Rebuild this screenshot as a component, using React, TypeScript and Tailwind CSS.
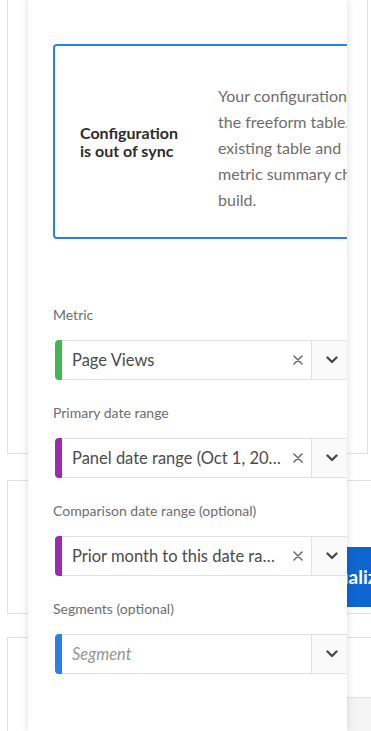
import React from "react";

const font = { fontFamily: "Lato, 'Noto Sans', sans-serif" };

function XIcon() {
  return (
    <svg width="10" height="10" viewBox="0 0 10 10" className="shrink-0">
      <path d="M1 1L9 9M9 1L1 9" stroke="#6e6e6e" strokeWidth="1.6" strokeLinecap="round" />
    </svg>
  );
}

function Chevron() {
  return (
    <svg width="12" height="8" viewBox="0 0 12 8">
      <path d="M1.5 1.5L6 6L10.5 1.5" stroke="#4b4b4b" strokeWidth="2.4" fill="none" strokeLinecap="round" strokeLinejoin="round" />
    </svg>
  );
}

function Field({
  label,
  value,
  color,
  placeholder,
  last,
}: {
  label: string;
  value?: string;
  color: string;
  placeholder?: string;
  last?: boolean;
}) {
  return (
    <div className={last ? "" : "mb-[24px]"}>
      <div className="h-[18px] leading-[18px] text-[14px] text-[#6e6e6e] mb-[16px]">{label}</div>
      <div className="ml-[2px] flex h-[40px] w-[296px]">
        <div className="w-[7px] rounded-l-[4px]" style={{ backgroundColor: color }} />
        <div className="flex w-[249px] items-center border-y border-[#e1e1e1] pl-[10px] pr-[8px]">
          {value ? (
            <span className="flex-1 truncate text-[16.5px] text-[#4b4b4b]">{value}</span>
          ) : (
            <span className="flex-1 truncate text-[16.5px] italic text-[#959595]">{placeholder}</span>
          )}
          {value ? <span className="ml-[10px]"><XIcon /></span> : null}
        </div>
        <div className="flex w-[40px] items-center justify-center border border-[#e1e1e1] bg-[#fafafa] pl-[2px]">
          <Chevron />
        </div>
      </div>
    </div>
  );
}

export default function App() {
  return (
    <div className="relative h-[731px] w-[371px] overflow-hidden bg-white" style={font}>
      {/* background page */}
      <div className="flex flex-col px-[7px]">
        <div className="h-[454px] w-[361px] border border-t-0 border-[#e1e1e1]" />
        <div className="mt-[26px] h-[134px] w-[420px] border border-[#e1e1e1] pl-[276px] pt-[66px]">
          <div className="flex h-[60px] w-[130px] items-center justify-center bg-[#0d66d0] text-[19px] font-bold text-white">
            Visualize
          </div>
        </div>
        <div className="mt-[23px] h-[200px] w-[420px] border border-[#e1e1e1] pt-[59px]">
          <div className="ml-[300px] h-[60px] border-t border-[#e1e1e1] bg-[#f5f5f5]" />
        </div>
      </div>

      {/* drawer */}
      <div className="absolute left-[28px] top-0 h-[731px] w-[319px] overflow-hidden bg-white shadow-[0_0_8px_rgba(0,0,0,0.14)]">
        <div className="pl-[25px] pt-[44px]">
          <div className="flex h-[195px] w-[360px] items-center rounded-[4px] border-2 border-[#2680eb] pl-[25px]">
            <div className="w-[138px] shrink-0 text-[16px] font-bold leading-[18px] text-[#2c2c2c]">
              Configuration
              <br />
              is out of sync
            </div>
            <div className="mt-[13px] whitespace-nowrap text-[16px] leading-[26px] text-[#6e6e6e]">
              <div>Your configuration is out of sync with</div>
              <div>the freeform table. Rebuild to replace the</div>
              <div>existing table and</div>
              <div>metric summary chart you originally</div>
              <div>build.</div>
            </div>
          </div>

          <div className="mt-[67px]">
            <Field label="Metric" value="Page Views" color="#45b553" />
            <Field label="Primary date range" value="Panel date range (Oct 1, 2023 - Oct 31, 2023)" color="#9c2bb0" />
            <Field label="Comparison date range (optional)" value="Prior month to this date range" color="#9c2bb0" />
            <Field label="Segments (optional)" placeholder="Segment" color="#2d7ee8" last />
          </div>
        </div>
      </div>
    </div>
  );
}
